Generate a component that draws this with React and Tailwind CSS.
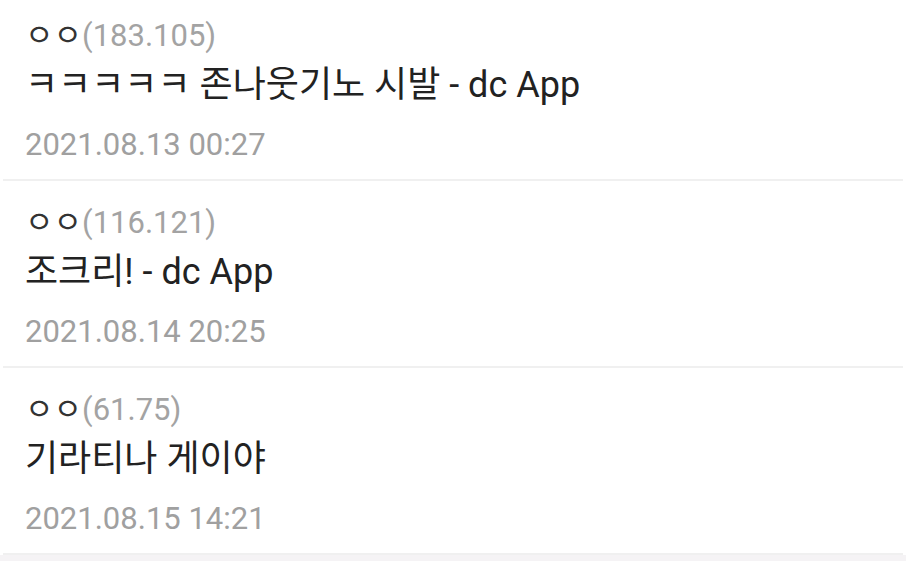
import React from "react";

const items = [
  { nick: "ㅇㅇ", ip: "(183.105)", title: "ㅋㅋㅋㅋㅋ 존나웃기노 시발 - dc App", date: "2021.08.13 00:27" },
  { nick: "ㅇㅇ", ip: "(116.121)", title: "조크리! - dc App", date: "2021.08.14 20:25" },
  { nick: "ㅇㅇ", ip: "(61.75)", title: "기라티나 게이야", date: "2021.08.15 14:21" },
];

export default function App() {
  return (
    <div
      className="w-[906px] h-[561px] overflow-hidden bg-[#f5f3f5]"
      style={{ fontFamily: 'Roboto, "Noto Sans CJK KR", sans-serif' }}
    >
      <div className="-mt-[6px] bg-white px-[3px]">
        {items.map((it, i) => (
          <div key={i} className="h-[187px] border-b-2 border-[#f0f0f0] pl-[22px] pt-[22px]">
            <div className="text-[31px] leading-[40px] whitespace-nowrap">
              <span className="text-[#333333]">{it.nick}</span>
              <span className="text-[#a3a3a3]">{it.ip}</span>
            </div>
            <div className="mt-[5px] text-[36px] leading-[48px] text-[#222222] whitespace-nowrap">
              {it.title}
            </div>
            <div className="mt-[16px] text-[31px] leading-[40px] text-[#a0a0a0] whitespace-nowrap">
              {it.date}
            </div>
          </div>
        ))}
      </div>
    </div>
  );
}
